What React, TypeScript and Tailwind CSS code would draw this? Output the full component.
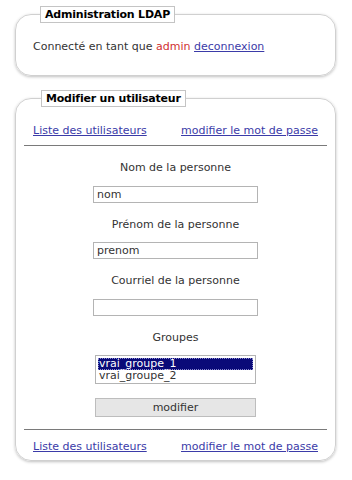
import React from 'react';

const Links = () => (
  <div className="flex justify-between px-[9px]">
    <a href="#" className="text-[#3b3ba8] underline">Liste des utilisateurs</a>
    <a href="#" className="text-[#3b3ba8] underline">modifier le mot de passe</a>
  </div>
);

const Field = ({ label, value, first }: { label: string; value: string; first?: boolean }) => (
  <>
    <div className={first ? 'mt-[13px] text-center' : 'mt-[14px] text-center'}>{label}</div>
    <div className="mx-auto mt-[9px] h-[17px] w-[165px] border border-[#b4b4b4] bg-white pl-[3px] leading-[15px]">
      {value}
    </div>
  </>
);

export default function App() {
  return (
    <div className="min-h-[480px] bg-white pl-[15px] pr-[16px] pt-[6px] font-['DejaVu_Sans',sans-serif] text-[11px] text-[#333]">
      <fieldset className="rounded-[16px] border border-[#d0d0d0] px-[17px] pb-[19px] shadow-[0_1px_3px_rgba(0,0,0,0.25)]">
        <legend className="ml-[7px] border border-[#c4c4c4] bg-white px-[4px] text-[11px] leading-[15px] font-bold tracking-[-0.2px] text-black">
          Administration LDAP
        </legend>
        <p className="mt-[16px]">
          Connecté en tant que <span className="text-[#d03030]">admin</span>{' '}
          <a href="#" className="text-[#3b3ba8] underline">deconnexion</a>
        </p>
      </fieldset>

      <fieldset className="mt-[14px] rounded-[16px] border border-[#d0d0d0] px-[8px] pb-[4px] shadow-[0_1px_3px_rgba(0,0,0,0.25)]">
        <legend className="ml-[17px] border border-[#c4c4c4] bg-white px-[4px] text-[11px] leading-[15px] font-bold tracking-[-0.2px] text-black">
          Modifier un utilisateur
        </legend>
        <div className="mt-[16px]">
          <Links />
        </div>
        <div className="mt-[6px] h-[2px] border-t border-[#7a7a7a]" />

        <Field label="Nom de la personne" value="nom" first />
        <Field label="Prénom de la personne" value="prenom" />
        <Field label="Courriel de la personne" value="" />

        <div className="mt-[14px] text-center">Groupes</div>
        <div className="mx-auto mt-[9px] h-[29px] w-[161px] border border-[#b4b4b4] bg-white p-[2px] leading-[12px]">
          <div className="bg-[#0a0a78] pl-[1px] text-white outline-1 outline-dotted outline-[#8a8ad0] -outline-offset-1">
            vrai_groupe_1
          </div>
          <div className="pl-[1px]">vrai_groupe_2</div>
        </div>

        <button className="mx-auto mt-[14px] block h-[19px] w-[161px] border border-[#bdbdbd] bg-[#e6e6e6] text-center leading-[17px] text-[#333]">
          modifier
        </button>

        <div className="mt-[12px] h-[2px] border-t border-[#7a7a7a]" />
        <div className="mt-[8px]">
          <Links />
        </div>
      </fieldset>
    </div>
  );
}
